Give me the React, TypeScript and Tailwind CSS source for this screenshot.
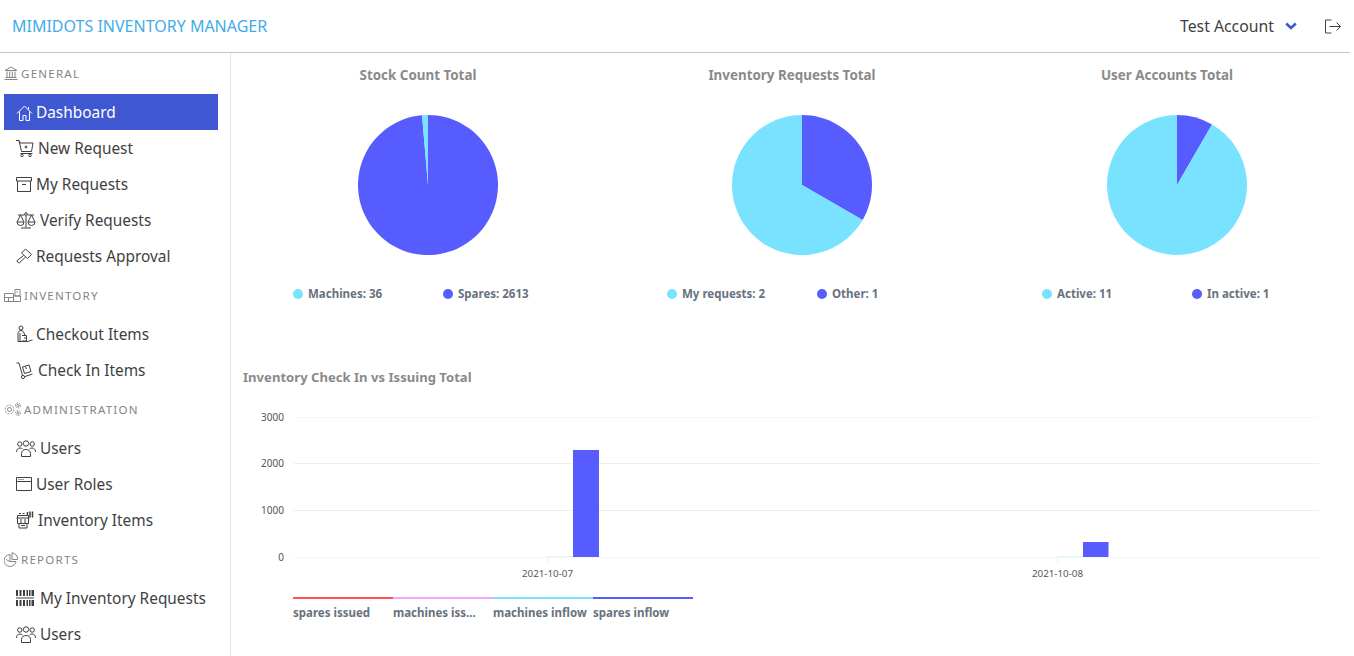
import type { ReactNode } from "react";

function Ico({ w, h, children, fill }: { w: number; h: number; children: ReactNode; fill?: boolean }) {
  return (
    <svg
      width={w}
      height={h}
      viewBox={`0 0 ${w} ${h}`}
      fill={fill ? "currentColor" : "none"}
      stroke={fill ? "none" : "currentColor"}
      strokeWidth="1"
      className="shrink-0"
    >
      {children}
    </svg>
  );
}

const HomeIcon = () => (
  <Ico w={17} h={17}>
    <path d="M1 9.5 8.5 2 16 9.5M3.5 7.5v9h3.5v-5h3v5h3.5v-9M12.5 3v2.5" />
  </Ico>
);
const CartIcon = () => (
  <Ico w={18} h={18}>
    <path d="M0 1.5h3l1 2.5h13l-1.5 8.5H5.5L3 1.5M8.5 8h3M10 6.5v3M4.5 14.5h12" />
    <circle cx="6" cy="16.5" r="1.3" />
    <circle cx="14" cy="16.5" r="1.3" />
  </Ico>
);
const ArchiveIcon = () => (
  <Ico w={16} h={15}>
    <path d="M.5.5h15v3.5H.5zM1.5 4v10.5h13V4M6 7.5h4" />
  </Ico>
);
const ScaleIcon = () => (
  <Ico w={20} h={17}>
    <circle cx="10" cy="2" r="1.3" />
    <path d="M10 3.5v12M5 16h10M2 3h6.5M11.5 3H18M4.5 3 1 10h7zM15.5 3 12 10h7zM1 10a3.5 3.5 0 0 0 7 0M12 10a3.5 3.5 0 0 0 7 0" />
  </Ico>
);
const GavelIcon = () => (
  <Ico w={16} h={16}>
    <path d="M9.5 1 15.5 6.5 11.5 10.5 5.5 5ZM7.5 7.5 .8 12.8 3 15.2 9.5 9" />
  </Ico>
);
const BankIcon = () => (
  <Ico w={14} h={14}>
    <path d="M1 4.5 7 1l6 3.5zM3 5.5v5.5M5.7 5.5v5.5M8.3 5.5v5.5M11 5.5v5.5M1.5 11.5h11M.5 13.5h13" />
  </Ico>
);
const WarehouseIcon = () => (
  <Ico w={17} h={13}>
    <path d="M.5 4.5h9v8H.5zM9.5 7h7v5.500h-7zM11 .5h5v6.500h-5zM.5 8.500h9M4.500 8.500v4M12.500 3h1.500" />
  </Ico>
);
const PorterIcon = () => (
  <Ico w={17} h={18}>
    <circle cx="5" cy="3" r="2" />
    <path d="M2 16.500V8.500c0-2 1.500-3 3-3s2.500 1 3 2.500l1 2.500M4 8v8M6 10.500h4.500v5.500H6M8 13h3M2 16.500h9.500c2 0 3-1.500 5-1.500" />
  </Ico>
);
const DollyIcon = () => (
  <Ico w={17} h={17}>
    <circle cx="7" cy="15" r="1.600" />
    <path d="M.5 1H3l3.500 12.500M6.500 5 13 3l2 6.500-6.500 2zM9 14.500l7.500-2.500M9.500 4.500l1 2.500" />
  </Ico>
);
const CogsIcon = () => (
  <Ico w={17} h={15}>
    <circle cx="5.500" cy="7.500" r="2" />
    <circle cx="5.500" cy="7.500" r="4.300" strokeDasharray="2 1.300" />
    <circle cx="14" cy="3.500" r="1" />
    <circle cx="14" cy="3.500" r="2.500" strokeDasharray="1.500 1" />
    <circle cx="14" cy="11" r="1" />
    <circle cx="14" cy="11" r="2.500" strokeDasharray="1.500 1" />
  </Ico>
);
const UsersIcon = () => (
  <Ico w={20} h={17}>
    <circle cx="3.800" cy="4" r="2.200" />
    <circle cx="10" cy="3.500" r="2.700" />
    <circle cx="16.200" cy="4" r="2.200" />
    <path d="M.5 12c0-2.500 1.300-4 3.500-4 1 0 1.800.3 2.500 1M19.500 12c0-2.500-1.300-4-3.500-4-1 0-1.800.3-2.500 1M5.500 16.500v-3c0-2.500 2-4 4.500-4s4.500 1.500 4.500 4v3z" />
  </Ico>
);
const WindowIcon = () => (
  <Ico w={16} h={14}>
    <path d="M.5.5h15v13H.5zM.5 4.500h15M2.500 2.500h1M4.500 2.500h1M6.500 2.500h1" />
  </Ico>
);
const RegisterIcon = () => (
  <Ico w={18} h={18}>
    <path d="M1.500 4.500h11v8h-11zM.5 7h13M3 12.500V17h8v-4.500M4 9h2M8 9h2M4 11h2M8 11h2M5 14.500h4M3 2.500h2M6.500 2.500h2" />
    <path d="M11.500 1v3M14 .5v6M16.500.5v6" strokeWidth="1.500" />
  </Ico>
);
const PieIcon = () => (
  <Ico w={14} h={15}>
    <path d="M6 2.500a6 6 0 1 0 6 7H6zM8 .8v6.700h5.500A6 6 0 0 0 8 .8ZM2 7.500l4 2" />
  </Ico>
);
const BarcodeIcon = () => (
  <Ico w={18} h={16}>
    <g stroke="none" fill="currentColor">
      <path d="M0 0h2v6H0zM3.500 0h2v6h-2zM7 0h2v6H7zM10.500 0h1.500v6h-1.500zM13 0h1.500v6H13zM15.500 0H18v6h-2.500z" />
      <path d="M0 10h2v6H0zM3.500 10h2v6h-2zM7 10h2v6H7zM10.500 10h1.500v6h-1.500zM13 10h1.500v6H13zM15.500 10H18v6h-2.500z" />
      <path d="M0 7.500h18v1H0z" />
    </g>
  </Ico>
);

type Item = { label: string; icon: () => ReactNode; box: string; active?: boolean };

const sections: { title: string; icon: () => ReactNode; box: string; items: Item[] }[] = [
  {
    title: "GENERAL",
    icon: BankIcon,
    box: "w-[17px]",
    items: [
      { label: "Dashboard", icon: HomeIcon, box: "w-[20px]", active: true },
      { label: "New Request", icon: CartIcon, box: "w-[22px]" },
      { label: "My Requests", icon: ArchiveIcon, box: "w-[20px]" },
      { label: "Verify Requests", icon: ScaleIcon, box: "w-[24px]" },
      { label: "Requests Approval", icon: GavelIcon, box: "w-[20px]" },
    ],
  },
  {
    title: "INVENTORY",
    icon: WarehouseIcon,
    box: "w-[20px]",
    items: [
      { label: "Checkout Items", icon: PorterIcon, box: "w-[20px]" },
      { label: "Check In Items", icon: DollyIcon, box: "w-[22px]" },
    ],
  },
  {
    title: "ADMINISTRATION",
    icon: CogsIcon,
    box: "w-[20px]",
    items: [
      { label: "Users", icon: UsersIcon, box: "w-[24px]" },
      { label: "User Roles", icon: WindowIcon, box: "w-[20px]" },
      { label: "Inventory Items", icon: RegisterIcon, box: "w-[22px]" },
    ],
  },
  {
    title: "REPORTS",
    icon: PieIcon,
    box: "w-[17px]",
    items: [
      { label: "My Inventory Requests", icon: BarcodeIcon, box: "w-[24px]" },
      { label: "Users", icon: UsersIcon, box: "w-[24px]" },
    ],
  },
];

const BLUE = "#575cff";
const CYAN = "#78e2ff";

// slice of a 70px circle, clockwise from 12 o'clock
function slice(from: number, to: number) {
  const point = (deg: number) => {
    const r = ((deg - 90) * Math.PI) / 180;
    return `${70 + 70 * Math.cos(r)} ${70 + 70 * Math.sin(r)}`;
  };
  return `M70 70 L${point(from)} A70 70 0 ${to - from > 180 ? 1 : 0} 1 ${point(to)} Z`;
}

function PieCard({
  title,
  cyan,
  blue,
  className = "",
}: {
  title: string;
  cyan: [string, number];
  blue: [string, number];
  className?: string;
}) {
  const blueDeg = (blue[1] / (blue[1] + cyan[1])) * 360;
  return (
    <div className={`w-[374px] shrink-0 flex flex-col ${className}`}>
      <h3 className="h-[20px] pr-[20px] text-center text-[13.4px] leading-[20px] font-bold text-[#8a8a8a]">{title}</h3>
      <div className="flex justify-center pt-[30px] pb-[30px]">
        <svg width="140" height="140" viewBox="0 0 140 140">
          <path d={slice(0, blueDeg)} fill={BLUE} />
          <path d={slice(blueDeg, 360)} fill={CYAN} />
        </svg>
      </div>
      <div className="flex pl-[52px] text-[11.5px] leading-[18px] font-bold text-[#67727e]">
        <div className="w-[150px] flex items-center gap-[5px]">
          <span className="w-[10px] h-[10px] rounded-full bg-[#78e2ff]" />
          {cyan[0]}: {cyan[1]}
        </div>
        <div className="w-[150px] flex items-center gap-[5px]">
          <span className="w-[10px] h-[10px] rounded-full bg-[#575cff]" />
          {blue[0]}: {blue[1]}
        </div>
      </div>
    </div>
  );
}

function BarChart() {
  const grid = [
    { y: 11.5, label: "3000", color: "#f7f7f7" },
    { y: 57.5, label: "2000", color: "#eeeeee" },
    { y: 104.5, label: "1000", color: "#eeeeee" },
    { y: 151.5, label: "0", color: "#f3f6f8" },
  ];
  return (
    <svg width="1090" height="180" viewBox="0 0 1090 180" className="block" fontFamily="'Noto Sans', sans-serif">
      {grid.map((g) => (
        <g key={g.label}>
          <line x1="53" x2="1078" y1={g.y} y2={g.y} stroke={g.color} />
          <text x="43" y={g.y + 3} textAnchor="end" fontSize="10" fill="#555">
            {g.label}
          </text>
        </g>
      ))}
      <line x1="306.5" x2="306.5" y1="151" y2="158" stroke="#eef2f5" />
      <line x1="816.5" x2="816.5" y1="151" y2="158" stroke="#eef2f5" />
      <rect x="306" y="150" width="26" height="1" fill="#dff6ff" />
      <rect x="332" y="44" width="26" height="107" fill={BLUE} />
      <rect x="816" y="150" width="26" height="1" fill="#dff6ff" />
      <rect x="842" y="136" width="25.5" height="15" fill={BLUE} />
      <text x="306.5" y="171" textAnchor="middle" fontSize="9.8" fill="#555">
        2021-10-07
      </text>
      <text x="816.5" y="171" textAnchor="middle" fontSize="9.8" fill="#555">
        2021-10-08
      </text>
    </svg>
  );
}

const seriesLegend = [
  { label: "spares issued", bar: "border-[#ff5252]" },
  { label: "machines iss...", bar: "border-[#f7a6f5]" },
  { label: "machines inflow", bar: "border-[#78e2ff]" },
  { label: "spares inflow", bar: "border-[#575cff]" },
];

export default function App() {
  return (
    <div className="h-screen overflow-hidden bg-white font-['Noto_Sans',sans-serif] text-[#3f3f3f]">
      <header className="h-[53px] w-[1350px] flex items-center border-b border-[#c4c4c4]">
        <div className="pl-[12px] text-[16px] text-[#42ace8]">MIMIDOTS INVENTORY MANAGER</div>
        <div className="ml-auto flex items-center text-[15.8px]">
          <span className="pt-[1px]">Test Account</span>
          <svg className="ml-[11px]" width="12" height="8" viewBox="0 0 12 8">
            <path d="M1.200 1.500 6 6l4.800-4.500" fill="none" stroke="#3f57d1" strokeWidth="2.600" />
          </svg>
          <svg className="ml-[28px] mr-[9px] text-[#444]" width="16" height="15" viewBox="0 0 16 15" fill="none" stroke="currentColor">
            <path d="M6.500 1H.5v13h6M4.500 7.500H15.500M11.500 3.500l4 4-4 4" />
          </svg>
        </div>
      </header>

      <div className="flex">
        <aside className="w-[231px] shrink-0 h-[603px] border-r border-[#e2e4ea]">
          {sections.map((s, i) => (
            <div key={s.title} className={i === 0 ? "-mt-px" : ""}>
              <div className="h-[42px] pl-[4px] flex items-center text-[11.6px] tracking-[1.2px] text-[#858585]">
                <span className={`${s.box} shrink-0 flex`}>
                  <s.icon />
                </span>
                <span className="pt-[2px]">{s.title}</span>
              </div>
              {s.items.map((item) => (
                <div
                  key={item.label}
                  className={
                    item.active
                      ? "ml-[4px] w-[214px] h-[36px] pl-[12px] flex items-center text-[15.4px] text-white bg-[#3f57d1]"
                      : "ml-[4px] w-[214px] h-[36px] pl-[12px] flex items-center text-[15.4px]"
                  }
                >
                  <span className={`${item.box} shrink-0 flex`}>
                    <item.icon />
                  </span>
                  <span className="pt-[2px]">{item.label}</span>
                </div>
              ))}
            </div>
          ))}
        </aside>

        <main className="flex-1 min-w-0 pl-[10px] pt-[12px]">
          <div className="flex">
            <PieCard title="Stock Count Total" cyan={["Machines", 36]} blue={["Spares", 2613]} />
            <PieCard title="Inventory Requests Total" cyan={["My requests", 2]} blue={["Other", 1]} className="mr-[1px]" />
            <PieCard title="User Accounts Total" cyan={["Active", 11]} blue={["In active", 1]} />
          </div>

          <h3 className="mt-[64px] pl-[2px] h-[20px] text-[13.1px] leading-[20px] font-bold text-[#8a8a8a]">
            Inventory Check In vs Issuing Total
          </h3>
          <div className="pt-[19px]">
            <BarChart />
          </div>
          <div className="mt-[11px] flex pl-[52px] text-[11.5px] font-bold text-[#67727e]">
            {seriesLegend.map((l) => (
              <div key={l.label} className={`w-[100px] border-t-2 pt-[5px] leading-[18px] whitespace-nowrap ${l.bar}`}>
                {l.label}
              </div>
            ))}
          </div>
        </main>
      </div>
    </div>
  );
}
